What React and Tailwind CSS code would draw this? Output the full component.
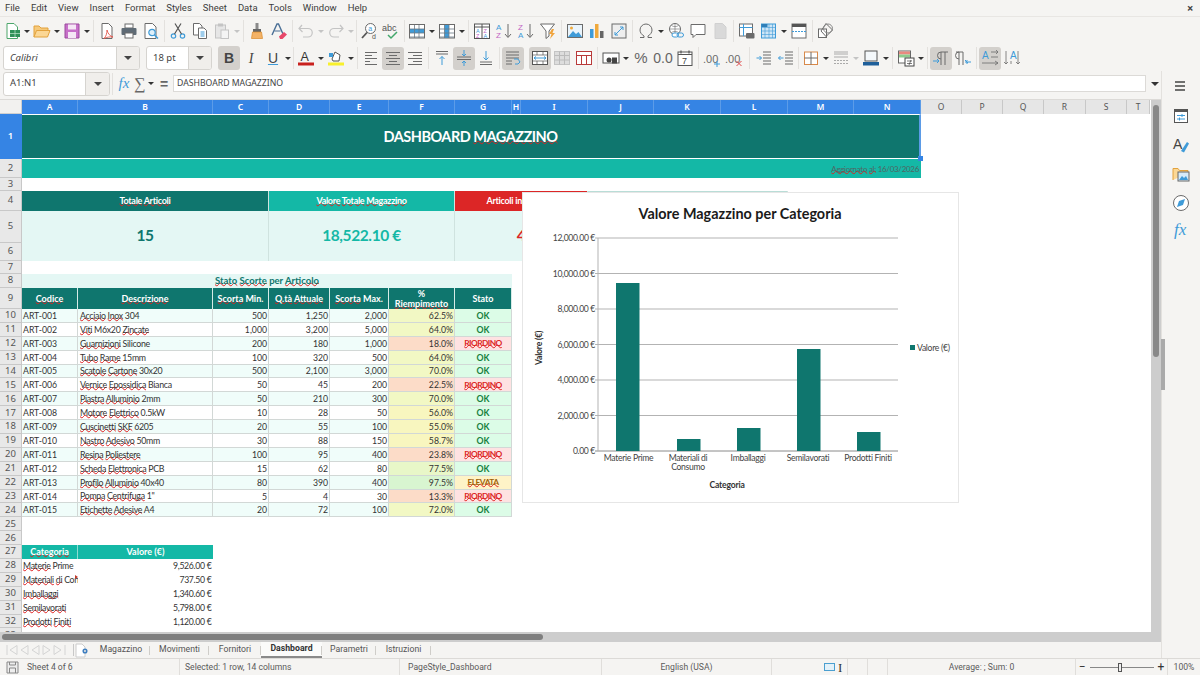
import React from "react";

const ui = "font-['Roboto',sans-serif]";
const noto = "font-['Noto_Sans',sans-serif]";
const cell = "font-['Lato',sans-serif]";

// toolbar icons, all on an 18x18 box
const BLUE = "#3f9bd8";
const GRAY = "#6b6b6b";
const PALE = "#c4c4c4";
const lines = (ys, x1, x2, c = GRAY) => ys.map((y) => <path key={y} d={`M${x1} ${y}H${x2}`} stroke={c} />);
const gridLines = (c) => <path d="M2 7H16M2 11H16M2 15H16M6.5 3V16M11 3V16" stroke={c} strokeWidth=".8" />;

const ICONS = {
  newdoc: <><path d="M4 1.5h7l3.5 3.5v11.5H4z" fill="#fff" stroke="#4ca66b" /><rect x="7" y="8" width="10" height="7" fill="#2f9158" /><path d="M7 11.5H17M12 8v7" stroke="#bfe6cd" strokeWidth=".7" /></>,
  open: <><path d="M1 15V4h5l2 2h7v3" fill="#f6c97a" stroke="#e2a23d" /><path d="M1 15l2.5-6.5H17L14.5 15z" fill="#fbd795" stroke="#e2a23d" /></>,
  save: <><path d="M2 2h14v14H2z" fill="#c76fc9" stroke="#9a4a9c" /><rect x="5" y="2.5" width="8" height="5" fill="#f5e6f5" /><rect x="5" y="10" width="8" height="6" fill="#f5e6f5" /></>,
  pdf: <><path d="M4 1.5h6.5L14 5v11.5H4z" fill="#fff" stroke={GRAY} /><path d="M9 8c1 4 3 6 6 7-3-.4-6 0-9 1.5 2-2 3-5 3-8.500z" fill="none" stroke="#e2574c" strokeWidth=".9" /></>,
  print: <><rect x="5" y="2" width="8" height="4" fill="#fff" stroke={GRAY} /><rect x="1.500" y="6" width="15" height="7" rx="1" fill="#5f6b75" /><rect x="5" y="11" width="8" height="5" fill="#fff" stroke={GRAY} /></>,
  preview: <><path d="M3 1.500h7.500L14 5v11.500H3z" fill="#fff" stroke={GRAY} /><circle cx="10" cy="10.500" r="3.200" fill="#dff0fa" stroke={BLUE} strokeWidth="1.200" /><path d="M12.500 13l3.500 3.500" stroke={BLUE} strokeWidth="1.500" /></>,
  cut: <><circle cx="4.500" cy="14" r="2.200" fill="none" stroke={BLUE} strokeWidth="1.200" /><circle cx="13.500" cy="14" r="2.200" fill="none" stroke={BLUE} strokeWidth="1.200" /><path d="M5.500 12L12 1.500M12.500 12L6 1.500" stroke="#555" strokeWidth="1.200" /></>,
  copy: <><path d="M2.500 1.500h6l2.500 2.500v9H2.500z" fill="#fff" stroke={GRAY} /><path d="M7.500 6h5.500l2.500 2.500v8h-8z" fill="#fff" stroke={GRAY} /><path d="M9.500 10h4M9.500 12h4M9.500 14h4" stroke={BLUE} /></>,
  paste: <><rect x="2.500" y="3" width="10" height="13" fill="#e6e6e6" stroke={PALE} /><rect x="5" y="1.500" width="5" height="3" fill={PALE} /><rect x="8" y="8" width="7.500" height="8.500" fill="#f4f4f4" stroke={PALE} /></>,
  brush: <><rect x="7.500" y="1" width="3" height="6" fill="#8a8a8a" /><path d="M5 7h8v3H5z" fill="#666" /><path d="M4.500 10h9l1 6.500h-11z" fill="#f3b266" stroke="#d98a2b" strokeWidth=".7" /></>,
  clear: <><path d="M2 13L7 2h1.500L13 12" fill="none" stroke="#4a6f96" strokeWidth="1.400" /><path d="M4.500 9h6" stroke="#4a6f96" /><path d="M9 14.500l5-4.500 3 2.500-4.500 4.500H10z" fill="#e8486a" /></>,
  undo: <path d="M5 3L2 6.500 5.500 10M2.500 6.500H11a4.200 4.200 0 010 8.500H6" fill="none" stroke={PALE} strokeWidth="1.200" />,
  redo: <path d="M13 3l3 3.500-3.500 3.500M15.500 6.500H7a4.200 4.200 0 000 8.500h5" fill="none" stroke={PALE} strokeWidth="1.200" />,
  find: <><circle cx="10.500" cy="6.500" r="5" fill="#fff" stroke={GRAY} /><path d="M7 10.500L2 16" stroke="#555" strokeWidth="1.800" /><text x="8.300" y="9" fontSize="7" fill={BLUE}>a</text><text x="12" y="17" fontSize="7" fill="#555">d</text></>,
  spell: <><text x="0" y="9" fontSize="9" fill="#555">abc</text><path d="M6 13l3 3 6-6" fill="none" stroke="#43a86b" strokeWidth="1.500" /></>,
  rows: <><rect x="1.500" y="2.500" width="15" height="13.500" fill="#fff" stroke={GRAY} /><rect x="2" y="7" width="14" height="4" fill={BLUE} />{gridLines("#6b7a85")}</>,
  cols: <><rect x="1.500" y="2.500" width="15" height="13.500" fill="#fff" stroke={GRAY} /><rect x="6.500" y="3" width="4.500" height="13" fill={BLUE} />{gridLines("#6b7a85")}</>,
  sort: <><rect x="1.500" y="2" width="15" height="14.500" fill="#fff" stroke="#555" /><path d="M1.500 5H16.500M9 2v14.500" stroke="#555" /><text x="3" y="10.500" fontSize="5.500" fill={BLUE}>A</text><text x="3" y="15.500" fontSize="5.500" fill="#c264c4">Z</text><text x="10.500" y="10.500" fontSize="5.500" fill="#c264c4">Z</text><text x="10.500" y="15.500" fontSize="5.500" fill={BLUE}>A</text></>,
  asc: <><text x="1" y="8" fontSize="8" fill={BLUE}>A</text><text x="1" y="16" fontSize="8" fill="#c264c4">Z</text><path d="M13 2v13M10 12l3 3.500 3-3.500" fill="none" stroke={GRAY} /></>,
  desc: <><text x="1" y="8" fontSize="8" fill="#c264c4">Z</text><text x="1" y="16" fontSize="8" fill={BLUE}>A</text><path d="M13 2v13M10 12l3 3.500 3-3.500" fill="none" stroke={GRAY} /></>,
  filter: <><path d="M1.500 2h14l-5.500 7v5l-3 2.500V9z" fill="#fff" stroke={GRAY} /><path d="M13 7l-3 5h2.500L11 17l5-6h-2.500l1.500-4z" fill="#f1a43c" /></>,
  image: <><rect x="1.500" y="2.500" width="15" height="13" fill="#eaf4fb" stroke={GRAY} /><circle cx="5.500" cy="6" r="1.500" fill="#f0a93c" /><path d="M2 15l5-6 3 3 2.500-2 3.500 5z" fill={BLUE} /></>,
  chart: <><rect x="2" y="7" width="3.500" height="9" fill={BLUE} /><rect x="7" y="2" width="3.500" height="14" fill="#f0a93c" /><rect x="12" y="9" width="3.500" height="7" fill="#666" /></>,
  pivot: <><rect x="2" y="2" width="14" height="14" fill="#eee" stroke={GRAY} /><path d="M5 13L13 5M10 5h3v3M5 10v3h3" fill="none" stroke={BLUE} /></>,
  omega: <path d="M3 15.500h4v-1.500C4.500 12.500 3 10.500 3 8a6 6 0 0112 0c0 2.500-1.500 4.500-4 6v1.500h4" fill="none" stroke={GRAY} />,
  link: <><circle cx="8" cy="7" r="5.500" fill="#fff" stroke={GRAY} /><path d="M2.500 7h11M8 1.500v11M4.500 3.500c2 1.500 5 1.500 7 0M4.500 10.500c2-1.500 5-1.500 7 0" stroke={GRAY} strokeWidth=".6" fill="none" /><rect x="5" y="11" width="6.500" height="4" rx="2" fill="#fff" stroke={BLUE} /><rect x="10" y="11" width="6.500" height="4" rx="2" fill="none" stroke={BLUE} /></>,
  comment: <path d="M2 2.500h14v10H7l-3 3v-3H2z" fill="#fff" stroke={GRAY} />,
  note: <path d="M4 1.500h7.500L15 5v11.500H4z" fill="#d9d9d9" stroke="#d0d0d0" />,
  printarea: <><rect x="1.500" y="2" width="13" height="12" fill="#fff" stroke={GRAY} /><path d="M1.500 5.500h13M5.500 2v12" stroke={BLUE} /><rect x="8" y="11" width="8.500" height="5.500" rx="1" fill="#6b6b6b" /></>,
  freeze: <><rect x="1.500" y="2" width="14" height="14" fill="#cfe6f6" stroke={BLUE} /><path d="M1.500 5.500h14M1.500 9h14M1.500 12.500h14M5 2v14M9 2v14M12.500 2v14" stroke={BLUE} strokeWidth=".6" /><rect x="1.500" y="2" width="6" height="3" fill="#2f7fb8" /></>,
  split: <><rect x="2" y="2" width="14" height="14" fill="#fff" stroke={GRAY} /><rect x="2" y="2" width="14" height="3" fill="#555" /><path d="M2 9.500h14" stroke={BLUE} strokeDasharray="2 1" /></>,
  shapes: <><rect x="1.500" y="7" width="8" height="8.500" fill="#fff" stroke={GRAY} /><path d="M9 1.500l6.500 6.500L9 14.500 4 9z" fill="none" stroke={GRAY} /><circle cx="11" cy="6.500" r="4.500" fill="none" stroke="#888" /></>,
  fontcolor: <><text x="3.500" y="12" fontSize="12.500" fill="#333">A</text><rect x="1" y="13.500" width="16" height="3" fill="#c9211e" /></>,
  highlight: <><path d="M5 10l3-7 5 3-1 6H6z" fill="#fff" stroke="#555" /><rect x="2" y="4" width="4" height="4" fill={BLUE} /><rect x="1" y="13.500" width="16" height="3" fill="#f8f02c" /></>,
  alLeft: <g>{lines([3.500, 6.500, 9.500, 12.500, 15.500], 3, 15)}<path d="M10 6.500h5M8 12.500h7" stroke="#eee" /></g>,
  alCenter: <g>{lines([3.500, 9.500, 15.500], 2, 16)}{lines([6.500, 12.500], 5, 13)}</g>,
  alRight: <g>{lines([3.500, 9.500, 15.500], 2, 16)}{lines([6.500, 12.500], 7, 16)}</g>,
  vTop: <g>{lines([2.500, 5], 3, 15)}<path d="M9 16V7.500M6.500 10L9 7.500 11.500 10" fill="none" stroke={BLUE} /></g>,
  vMid: <g>{lines([8, 10.500], 2, 16)}<path d="M9 1v6M7 5l2 2 2-2M9 17v-5M7 14l2-2 2 2" fill="none" stroke={BLUE} /></g>,
  vBottom: <g>{lines([13, 15.500], 3, 15)}<path d="M9 2v9M6.500 8.500L9 11l2.500-2.500" fill="none" stroke={BLUE} /></g>,
  wrap: <g>{lines([3, 6, 9], 2, 15)}{lines([12, 15], 2, 8)}<path d="M10 10h4l2 3-2 2h-3" fill="none" stroke={BLUE} /></g>,
  merge: <><rect x="1.500" y="2.500" width="15" height="13" fill="#fff" stroke="#555" /><path d="M1.500 6h15M1.500 12h15M6 2.500V6M12 2.500V6M6 12v3.500M12 12v3.500" stroke="#555" strokeWidth=".7" /><path d="M3 9h12M5 7.500L3 9l2 1.500M13 7.500L15 9l-2 1.500" fill="none" stroke={BLUE} /></>,
  mergeOff: <><rect x="1.500" y="2.500" width="15" height="13" fill="#ddd" stroke={PALE} /><path d="M1.500 6.500h15M1.500 11h15M6.500 2.500v13M11.500 2.500v13" stroke="#bbb" /></>,
  redGrid: <><rect x="1.500" y="2.500" width="15" height="13" fill="#fff" stroke="#b93a3a" /><path d="M1.500 6.500h15M6.500 6.500v9M11.500 6.500v9" stroke="#b93a3a" /></>,
  currency: <><rect x="1" y="4" width="16" height="10" fill="#fff" stroke="#555" /><circle cx="7" cy="11" r="2.500" fill="#444" /><rect x="10" y="8.500" width="5" height="6" fill="#444" /></>,
  date: <><rect x="2" y="3" width="14" height="13.500" fill="#fff" stroke="#555" /><path d="M2 5.500h14M5 1.500v3M13 1.500v3" stroke="#555" strokeWidth="1.200" /><text x="6" y="14.500" fontSize="9" fill="#444">7</text></>,
  addDec: <><text x="0" y="14" fontSize="11" fill={GRAY}>.00</text><path d="M11 15h6M14 12v6" stroke={BLUE} /></>,
  delDec: <><text x="0" y="14" fontSize="11" fill={GRAY}>.00</text><path d="M11.500 12l5 5M16.500 12l-5 5" stroke="#e04a4a" /></>,
  indent: <g>{lines([3, 6, 9, 12, 15], 8, 16)}<path d="M1.500 9h5M4.500 7l2 2-2 2" fill="none" stroke={BLUE} /></g>,
  outdent: <g>{lines([3, 6, 9, 12, 15], 8, 16)}<path d="M6.500 9h-5M3.500 7l-2 2 2 2" fill="none" stroke={BLUE} /></g>,
  borders: <><rect x="2.500" y="3" width="13" height="12.500" fill="#fff" stroke="#d8894a" /><path d="M9 3v12.500M2.500 9h13" stroke={GRAY} /></>,
  lineStyle: <g>{lines([3, 5, 8], 2, 16, "#aaa")}<path d="M2 11.500h14M2 14.500h14" stroke="#aaa" strokeDasharray="2 1" /></g>,
  borderColor: <><rect x="3" y="2" width="12" height="10" fill="#f4f8fb" stroke="#555" /><rect x="1" y="13" width="16" height="3.500" fill="#1e5f9a" /></>,
  cond: <><rect x="1.500" y="2" width="12" height="12" fill="#fff" stroke="#666" /><rect x="2" y="2.500" width="11" height="3" fill="#e98a80" /><rect x="2" y="5.500" width="11" height="3" fill="#8ecb8e" /><rect x="8" y="9" width="9" height="8" fill="#fff" stroke="#444" /><path d="M10 12h5M10 14.500h5M14 11l-2 5" stroke="#444" strokeWidth=".7" /></>,
  ltr: <><path d="M9 3h7M9 3v13M13 3v13M9 3a3.500 3.500 0 000 7" fill="none" stroke={GRAY} /><path d="M1 12h6M5 10l2 2-2 2" fill="none" stroke={BLUE} /></>,
  rtl: <><path d="M2 3h7M5 3v13M9 3v13M5 3a3.500 3.500 0 000 7" fill="none" stroke={GRAY} /><path d="M17 13h-5M13.500 11l-2 2 2 2M11 11l3 3" fill="none" stroke={BLUE} /></>,
  textH: <><text x="1" y="10" fontSize="10" fill={BLUE}>A</text><path d="M10 3h7M10 8h7M1 14h16M14 12l3 2-3 2M15 1l2 2-2 2" fill="none" stroke={GRAY} strokeWidth=".8" /></>,
  textV: <><text x="7" y="10" fontSize="10" fill={BLUE}>A</text><path d="M3 2v13M1 13l2 2 2-2M8 12v3M15 2v13M13 13l2 2 2-2" fill="none" stroke={GRAY} strokeWidth=".8" /></>,
  panel: <><rect x="2.500" y="2.500" width="13" height="13" fill="#fff" stroke="#555" /><rect x="2.500" y="2.500" width="13" height="2.500" fill="#555" /><path d="M5 8.500h8M5 12h8" stroke={BLUE} /><path d="M10 7v3M7.500 10.500v3" stroke={BLUE} /></>,
  styles: <><text x="1" y="13" fontSize="14" fill="#444">A</text><path d="M9 15l6-9 2 1.500-5 9z" fill={BLUE} /></>,
  gallery: <><path d="M1 15V3.500h5l1.500 2H16V8" fill="#fbd795" stroke="#e2a23d" /><rect x="6" y="7" width="11" height="9" fill="#d7ebf9" stroke="#666" /><path d="M7 15l3-4 2 2 2-2 2 4z" fill={BLUE} /></>,
  navigator: <><circle cx="9" cy="9" r="7.500" fill="#fff" stroke={GRAY} /><path d="M13 5l-2 6-6 2 2-6z" fill={BLUE} /></>,
};

function Icon({ name, active }) {
  return (
    <span className={`flex h-[23px] w-[22px] shrink-0 items-center justify-center rounded-[3px] ${active ? "bg-[#d3d0cc]" : ""}`}>
      <svg width="18" height="18" viewBox="0 0 18 18" fill="none" style={{ fontFamily: "Liberation Sans" }}>
        {ICONS[name]}
      </svg>
    </span>
  );
}

const Caret = ({ pale }) => (
  <span className="flex w-[8px] shrink-0 justify-center">
    <span className={`h-0 w-0 border-x-[3px] border-t-[3px] border-x-transparent ${pale ? "border-t-[#c4c4c4]" : "border-t-[#333]"}`} />
  </span>
);

const Sep = ({ w = "w-[5px]" }) => (
  <span className={`flex h-[22px] shrink-0 justify-center ${w}`}>
    <span className="h-full w-px bg-[#e3e1de]" />
  </span>
);

const WAVE = "underline decoration-[#e02020] decoration-wavy decoration-1 underline-offset-[-2px] [text-decoration-skip-ink:none]";

// "~" at the start of a word marks it as flagged by the spell checker
function Spell({ text }) {
  return text.split(" ").map((word, i) => (
    <React.Fragment key={i}>
      {i > 0 && " "}
      {word.startsWith("~") ? <span className={WAVE}>{word.slice(1)}</span> : word}
    </React.Fragment>
  ));
}

function MenuBar() {
  const items = ["File", "Edit", "View", "Insert", "Format", "Styles", "Sheet", "Data", "Tools", "Window", "Help"];
  return (
    <div className={`${ui} flex h-[17px] items-center justify-between border-b border-[#e8e6e3] pl-[5px] pr-[7px] pt-px text-[9.5px] text-[#3c3c3c]`}>
      <div className="flex gap-[11px]">
        {items.map((m) => (
          <span key={m}>{m}</span>
        ))}
      </div>
      <span className="text-[11px] font-bold leading-none text-[#444]">×</span>
    </div>
  );
}

function StandardBar() {
  return (
    <div className="flex h-[28px] items-center pl-px">
      <Icon name="newdoc" /><Caret /><Icon name="open" /><Caret /><Icon name="save" /><Caret /><Sep />
      <Icon name="pdf" /><Icon name="print" /><Icon name="preview" /><Sep />
      <Icon name="cut" /><Icon name="copy" /><Icon name="paste" /><Caret pale /><Sep />
      <Icon name="brush" /><Icon name="clear" /><Sep />
      <Icon name="undo" /><Caret pale /><Icon name="redo" /><Caret pale /><Sep w="w-[3px]" />
      <Icon name="find" /><Icon name="spell" /><Sep w="w-[4px]" />
      <Icon name="rows" /><Caret /><Icon name="cols" /><Caret /><Sep />
      <Icon name="sort" /><Icon name="asc" /><Icon name="desc" /><Icon name="filter" /><Sep />
      <Icon name="image" /><Icon name="chart" /><Icon name="pivot" /><Sep />
      <Icon name="omega" /><Caret /><Icon name="link" /><Icon name="comment" /><Icon name="note" /><Sep />
      <Icon name="printarea" /><Icon name="freeze" /><Caret /><Icon name="split" /><Sep />
      <Icon name="shapes" />
    </div>
  );
}

function Combo({ value, italic, box, arrow }) {
  return (
    <div className={`${noto} ${box} flex h-[24px] shrink-0 overflow-hidden rounded-[3px] border border-[#d6d4d0] bg-white text-[9.5px] text-[#444]`}>
      <span className={`flex flex-1 items-center pl-[6px] ${italic ? "italic" : ""}`}>{value}</span>
      <span className={`${arrow} flex items-center justify-center border-l border-[#d6d4d0] bg-[#f0eeeb]`}>
        <span className="h-0 w-0 border-x-[4px] border-t-[4px] border-x-transparent border-t-[#444]" />
      </span>
    </div>
  );
}

const TextBtn = ({ children, className, active }) => (
  <span className={`flex h-[24px] w-[22px] shrink-0 items-center justify-center rounded-[3px] font-['Liberation_Sans',sans-serif] text-[14px] text-[#444] ${active ? "bg-[#d3d0cc]" : ""} ${className}`}>
    {children}
  </span>
);

function FormatBar() {
  return (
    <div className="flex h-[26px] items-center pl-[3px]">
      <Combo value="Calibri" italic box="w-[137px] mr-[6px]" arrow="w-[23px]" />
      <Combo value="18 pt" box="w-[66px] mr-[6px]" arrow="w-[23px]" />
      <TextBtn active className="font-bold">B</TextBtn>
      <TextBtn className="font-['Liberation_Serif',serif] italic">I</TextBtn>
      <TextBtn className="underline decoration-[#3f9bd8]">U</TextBtn>
      <Caret /><Sep w="w-[3px]" />
      <Icon name="fontcolor" /><Caret /><Icon name="highlight" /><Caret /><Sep />
      <Icon name="alLeft" /><Icon name="alCenter" active /><Icon name="alRight" /><Sep />
      <Icon name="vTop" /><Icon name="vMid" active /><Icon name="vBottom" /><Sep />
      <Icon name="wrap" active /><span className="w-[5px]" /><Icon name="merge" active /><Icon name="mergeOff" /><Icon name="redGrid" /><Sep />
      <Icon name="currency" /><Caret />
      <TextBtn className="font-['Liberation_Sans',sans-serif] text-[15px] text-[#666]">%</TextBtn>
      <TextBtn className="text-[13px] text-[#666]">0.0</TextBtn>
      <Icon name="date" /><Sep />
      <Icon name="addDec" /><Icon name="delDec" /><Sep w="w-[8px]" />
      <Icon name="indent" /><Icon name="outdent" /><Sep w="w-[3px]" />
      <Icon name="borders" /><Caret /><Icon name="lineStyle" /><Caret pale /><Icon name="borderColor" /><Caret /><Sep />
      <Icon name="cond" /><Caret /><Sep />
      <Icon name="ltr" active /><Icon name="rtl" /><Sep />
      <Icon name="textH" active /><Icon name="textV" />
    </div>
  );
}

function FormulaBar() {
  return (
    <div className="flex h-[29px] items-center border-b border-[#dcdad7] pb-[3px] pl-[3px]">
      <Combo value="A1:N1" box="w-[107px]" arrow="w-[24px]" />
      <Sep />
      <span className="w-[18px] text-center font-['Liberation_Serif',serif] text-[15px] italic leading-none text-[#3f9bd8]">fx</span>
      <span className="w-[14px] text-center font-['Liberation_Serif',serif] text-[16px] leading-none text-[#666]">∑</span>
      <Caret />
      <span className="w-[18px] text-center font-['Liberation_Sans',sans-serif] text-[14px] font-bold leading-none text-[#666]">=</span>
      <div className={`${noto} mr-[2px] flex h-[17px] flex-1 items-center border border-[#dcdad7] bg-white pl-[3px] text-[8.7px] text-[#444]`}>
        DASHBOARD MAGAZZINO
      </div>
      <span className="flex w-[13px] justify-center">
        <span className="h-0 w-0 border-x-[4px] border-t-[4px] border-x-transparent border-t-[#333]" />
      </span>
    </div>
  );
}

const COLS = [
  ["A", "w-[56px]"], ["B", "w-[135px]"], ["C", "w-[56px]"], ["D", "w-[61px]"], ["E", "w-[59px]"],
  ["F", "w-[66px]"], ["G", "w-[57px]"], ["H", "w-[9px]"], ["I", "w-[67px]"], ["J", "w-[66px]"],
  ["K", "w-[67px]"], ["L", "w-[67px]"], ["M", "w-[66px]"], ["N", "w-[67px]"],
  ["O", "w-[41px]"], ["P", "w-[41px]"], ["Q", "w-[41px]"], ["R", "w-[42px]"], ["S", "w-[41px]"], ["T", "w-[23px]"],
];

function ColumnHeader() {
  return (
    <div className={`${noto} flex h-[14px] text-[8.5px] leading-[14px]`}>
      <div className="w-[22px] shrink-0 border-b border-r border-[#cfcfcf] bg-[#f2f1ef]" />
      {COLS.map(([name, w], i) => (
        <div
          key={name}
          className={`${w} shrink-0 border-r text-center ${i < 14 ? "border-[#5c9ce8] bg-[#3584e4] font-semibold text-white" : "border-[#c8c8c8] bg-[#e6e6e6] text-[#555]"}`}
        >
          {name}
        </div>
      ))}
    </div>
  );
}

const ROW_HEADS = [
  ["1", "h-[45px]"], ["2", "h-[19px]"], ["3", "h-[13px]"], ["4", "h-[20px]"], ["5", "h-[32px]"], ["6", "h-[18px]"],
  ["7", "h-[13px]"], ["8", "h-[14px]"], ["9", "h-[21px]"],
];
for (let n = 10; n <= 33; n++) ROW_HEADS.push([String(n), "h-[13.9px]"]);

function RowHeader() {
  return (
    <div className={`${noto} w-[22px] shrink-0 text-[9.5px]`}>
      {ROW_HEADS.map(([n, h]) => (
        <div
          key={n}
          className={`${h} flex items-center justify-center border-b border-r ${n === "1" ? "border-[#3584e4] bg-[#3584e4] font-semibold text-white" : "border-[#c8c8c8] bg-[#e8e8e8] text-[#555]"}`}
        >
          {n}
        </div>
      ))}
    </div>
  );
}

const STOCK = [
  ["ART-001", "~Acciaio ~Inox 304", "500", "1,250", "2,000", "62.5%", "OK"],
  ["ART-002", "~Viti M6x20 ~Zincate", "1,000", "3,200", "5,000", "64.0%", "OK"],
  ["ART-003", "~Guarnizioni Silicone", "200", "180", "1,000", "18.0%", "RIORDINO"],
  ["ART-004", "~Tubo ~Rame 15mm", "100", "320", "500", "64.0%", "OK"],
  ["ART-005", "~Scatole ~Cartone 30x20", "500", "2,100", "3,000", "70.0%", "OK"],
  ["ART-006", "~Vernice ~Epossidica Bianca", "50", "45", "200", "22.5%", "RIORDINO"],
  ["ART-007", "~Piastra ~Alluminio 2mm", "50", "210", "300", "70.0%", "OK"],
  ["ART-008", "~Motore ~Elettrico 0.5kW", "10", "28", "50", "56.0%", "OK"],
  ["ART-009", "~Cuscinetti ~SKF 6205", "20", "55", "100", "55.0%", "OK"],
  ["ART-010", "~Nastro ~Adesivo 50mm", "30", "88", "150", "58.7%", "OK"],
  ["ART-011", "~Resina ~Poliestere", "100", "95", "400", "23.8%", "RIORDINO"],
  ["ART-012", "~Scheda ~Elettronica PCB", "15", "62", "80", "77.5%", "OK"],
  ["ART-013", "~Profilo ~Alluminio 40x40", "80", "390", "400", "97.5%", "ELEVATA"],
  ["ART-014", "~Pompa ~Centrifuga 1\"", "5", "4", "30", "13.3%", "RIORDINO"],
  ["ART-015", "~Etichette ~Adesive A4", "20", "72", "100", "72.0%", "OK"],
];

const STATUS = {
  OK: "text-[#15803d]",
  RIORDINO: `text-[8.4px] tracking-[-0.55px] text-[#dc2626] ${WAVE}`,
  ELEVATA: `text-[8.4px] tracking-[-0.55px] text-[#a16207] ${WAVE}`,
};

function fillColour(pct) {
  const v = parseFloat(pct);
  if (v < 30) return "bg-[#fcdcc8]";
  if (v < 60) return "bg-[#f8f6bf]";
  if (v < 75) return "bg-[#f2f8c4]";
  if (v < 90) return "bg-[#e8f7c8]";
  return "bg-[#d8f5d0]";
}

const tdBase = "flex shrink-0 items-center overflow-hidden whitespace-nowrap border-b border-r border-[#d2d8d6]";

function StockRow({ row, odd }) {
  const [code, name, min, qty, max, pct, status] = row;
  const bg = odd ? "bg-white" : "bg-[#f0fdfa]";
  return (
    <div className="flex h-[13.9px] text-[8.7px] text-[#333]">
      <div className={`${tdBase} ${bg} w-[56px] pl-[1px]`}>{code}</div>
      <div className={`${tdBase} ${bg} w-[135px] pl-[2px] text-[8.8px] tracking-[-0.3px]`}><span><Spell text={name} /></span></div>
      <div className={`${tdBase} ${bg} w-[56px] justify-end pr-[1px]`}>{min}</div>
      <div className={`${tdBase} ${bg} w-[61px] justify-end pr-[1px]`}>{qty}</div>
      <div className={`${tdBase} ${bg} w-[59px] justify-end pr-[1px]`}>{max}</div>
      <div className={`${tdBase} ${fillColour(pct)} w-[66px] justify-end pr-[1px]`}>{pct}</div>
      <div className={`${tdBase} w-[57px] justify-center ${status === "OK" ? "bg-[#dcfce7]" : status === "RIORDINO" ? "bg-[#fee2e2]" : "bg-[#fef3c7]"}`}>
        <span className={`font-bold ${STATUS[status]}`}>{status}</span>
      </div>
    </div>
  );
}

function Kpi({ w, head, value, tone }) {
  return (
    <div className={`${w} shrink-0`}>
      <div className={`flex h-[20px] items-center justify-center border-r border-[#cfe3df] text-[9px] font-bold tracking-[-0.3px] text-white ${tone.head}`}>
        <span><Spell text={head} /></span>
      </div>
      <div className={`flex h-[50px] items-center justify-center border-r border-[#cfe3df] bg-[#e4f7f4] text-[15.5px] font-bold tracking-[-0.4px] ${tone.text}`}>
        {value}
      </div>
    </div>
  );
}

function Body() {
  const heads = [
    ["~Codice", "w-[56px]"], ["~Descrizione", "w-[135px]"], ["~Scorta Min.", "w-[56px]"], ["~Q.tà ~Attuale", "w-[61px]"],
    ["~Scorta Max.", "w-[59px]"], ["% ~Riempimento", "w-[66px]"], ["Stato", "w-[57px]"],
  ];
  const cats = [
    ["~Materie Prime", "9,526.00 €"], ["~Materiali ~di Consumo", "737.50 €"], ["~Imballaggi", "1,340.60 €"],
    ["~Semilavorati", "5,798.00 €"], ["~Prodotti ~Finiti", "1,120.00 €"],
  ];
  return (
    <div className={`${cell} relative w-[899px] shrink-0`}>
      <div className="flex h-[45px] items-center justify-center border-y border-r-2 border-y-white border-r-[#5b9be6] bg-[#0f766e] text-[14.5px] font-bold tracking-[-0.5px] text-white">
        <span>DASHBOARD <Spell text="~MAGAZZINO" /></span>
      </div>
      <div className="flex h-[19px] items-center justify-end bg-[#14b8a6] pr-[2px] text-[8px] tracking-[-0.3px] text-[#4f6663]">
        <span><Spell text="~Aggiornato ~al: 16/03/2026" /></span>
      </div>
      <div className="h-[13px]" />
      <div className="flex">
        <Kpi w="w-[247px]" head="~Totale ~Articoli" value="15" tone={{ head: "bg-[#0f766e]", text: "text-[#0f766e]" }} />
        <Kpi w="w-[186px]" head="~Valore ~Totale ~Magazzino" value="18,522.10 €" tone={{ head: "bg-[#14b8a6]", text: "text-[#14b8a6]" }} />
        <Kpi w="w-[133px]" head="~Articoli in Riordino" value="4" tone={{ head: "bg-[#dc2626]", text: "text-[#dc2626]" }} />
        <Kpi w="w-[200px]" head="" value="" tone={{ head: "bg-[#b9ddd7]", text: "" }} />
      </div>
      <div className="h-[13px]" />
      <div className="flex h-[14px] w-[490px] items-center justify-center bg-[#e4f7f4] text-[9.5px] font-bold text-[#0f766e]">
        <span><Spell text="~Stato ~Scorte per ~Articolo" /></span>
      </div>
      <div className="flex h-[21px] text-[9px] font-bold text-white">
        {heads.map(([h, w]) => (
          <div key={h} className={`${w} flex shrink-0 items-center justify-center border-r border-[#d6ebe7] bg-[#0f766e] text-center leading-[10px]`}>
            <span className={h.startsWith("%") ? "block w-[58px]" : ""}><Spell text={h} /></span>
          </div>
        ))}
      </div>
      {STOCK.map((r, i) => (
        <StockRow key={r[0]} row={r} odd={i % 2 === 1} />
      ))}
      <div className="h-[27.8px]" />
      <div className="flex h-[13.9px] text-[9px] font-bold text-white">
        <div className="flex w-[56px] items-center justify-center border-r border-[#8fdcd2] bg-[#14b8a6]"><span><Spell text="~Categoria" /></span></div>
        <div className="flex w-[135px] items-center justify-center bg-[#14b8a6]">Valore (€)</div>
      </div>
      {cats.map(([n, v]) => (
        <div key={v} className="flex h-[13.9px] items-center text-[8.7px] tracking-[-0.3px] text-[#333]">
          <div className="relative w-[56px] overflow-hidden whitespace-nowrap pl-[1px]">
            <Spell text={n} />
            {n.includes("Consumo") && <span className="absolute right-0 top-[2px] h-0 w-0 border-y-[2px] border-l-[3px] border-y-transparent border-l-[#c0392b]" />}
          </div>
          <div className="w-[135px] pr-[1.5px] text-right">{v}</div>
        </div>
      ))}
      <div className="absolute left-[896px] top-[42px] h-[5px] w-[5px] bg-[#3584e4]" />
      <Chart />
    </div>
  );
}

function Chart() {
  const grid = [
    ["12,000.00 €", 45], ["10,000.00 €", 80.5], ["8,000.00 €", 116], ["6,000.00 €", 151.5],
    ["4,000.00 €", 187], ["2,000.00 €", 222.5], ["0.00 €", 258],
  ];
  const bars = [
    [93, 90], [154, 246], [214, 235], [274, 156], [334, 239],
  ];
  const labels = [
    ["Materie Prime", 105.5], ["Materiali di", 165], ["Imballaggi", 225], ["Semilavorati", 285], ["Prodotti Finiti", 345],
  ];
  return (
    <div className="absolute left-[500px] top-[78px] h-[311px] w-[437px] border border-[#e6e6e6] bg-white">
      <svg width="435" height="309" viewBox="0 0 435 309" fontFamily="Lato, sans-serif" fill="#333">
        <text x="217" y="26" fontSize="14.4" fontWeight="700" textAnchor="middle" fill="#1a1a1a">Valore Magazzino per Categoria</text>
        {grid.map(([label, y]) => (
          <g key={label}>
            <path d={`M72 ${y}H375`} stroke={y === 258 ? "#8a8a8a" : "#b3b3b3"} />
            <text x="72" y={y + 3} fontSize="8.6" letterSpacing="-0.35" textAnchor="end" fill="#444">{label}</text>
          </g>
        ))}
        <path d="M75 45V258" stroke="#b3b3b3" />
        {bars.map(([x, top]) => (
          <rect key={x} x={x} y={top} width="23.5" height={258 - top} fill="#0f766e" />
        ))}
        {labels.map(([t, x]) => (
          <text key={t} x={x} y="268" fontSize="8.6" letterSpacing="-0.3" textAnchor="middle" fill="#444">{t}</text>
        ))}
        <text x="165" y="277" fontSize="8.6" letterSpacing="-0.3" textAnchor="middle" fill="#444">Consumo</text>
        <text x="204" y="295" fontSize="8.6" letterSpacing="-0.2" fontWeight="700" textAnchor="middle">Categoria</text>
        <text x="0" y="0" fontSize="8.6" letterSpacing="-0.2" fontWeight="700" textAnchor="middle" transform="translate(19 155) rotate(-90)">Valore (€)</text>
        <rect x="387" y="152" width="5" height="5" fill="#0f766e" />
        <text x="394" y="158" fontSize="8.6" letterSpacing="-0.3" fill="#444">Valore (€)</text>
      </svg>
    </div>
  );
}

function Sheet() {
  return (
    <div className="relative flex min-h-0 flex-1">
      <div className="min-w-0 flex-1 overflow-hidden bg-white">
        <ColumnHeader />
        <div className="flex">
          <RowHeader />
          <Body />
        </div>
      </div>
      <div className="flex w-[10px] shrink-0 justify-center bg-[#cdcdcd] pt-[5px]">
        <div className="h-[252px] w-[6px] rounded-full bg-[#888]" />
      </div>
    </div>
  );
}

function HScroll() {
  return (
    <div className="flex h-[10px] items-center bg-[#cdcdcd] pl-[2px]">
      <div className="h-[6px] w-[541px] rounded-full bg-[#7f7f7f]" />
    </div>
  );
}

function TabBar() {
  const tabs = [
    ["Magazzino", "w-[58px]"], ["Movimenti", "w-[59px]"], ["Fornitori", "w-[52px]"],
    ["Dashboard", "w-[61px]"], ["Parametri", "w-[54px]"], ["Istruzioni", "w-[55px]"],
  ];
  return (
    <div className={`${ui} flex h-[16px] items-center text-[8.7px] text-[#555]`}>
      <svg width="60" height="12" viewBox="0 0 60 12" className="ml-[6px] mr-[7px]" fill="none" stroke="#d4d4d4">
        <path d="M1 1v10M11 1.500L4 6l7 4.500zM22 1.500L15 6l7 4.500zM33 1.500L26 6l7 4.500zM37 1.500L44 6l-7 4.500zM48 1.500L55 6l-7 4.500zM59 1v10" />
      </svg>
      <span className="h-[12px] w-px bg-[#c8c8c8]" />
      <svg width="13" height="15" viewBox="0 0 13 15" className="ml-[1px] mr-[4px]">
        <path d="M1 1h6l3 3v10H1z" fill="#fff" stroke="#ccc" />
        <circle cx="10" cy="8" r="1.800" fill="none" stroke="#3f7fc0" strokeWidth="1.500" />
      </svg>
      {tabs.map(([t, w]) => (
        <React.Fragment key={t}>
          <div className={`${w} flex h-full items-center justify-center ${t === "Dashboard" ? "border-b-2 border-b-[#8a8a8a] bg-[#fbfbfa] font-bold text-[#333]" : ""}`}>
            {t}
          </div>
          <span className="-ml-px h-[9px] w-px bg-[#cfcdc9]" />
        </React.Fragment>
      ))}
    </div>
  );
}

function Sidebar() {
  return (
    <div className="relative w-[39px] shrink-0 border-l border-[#e3e1de] pl-[8px]">
      <div className="flex h-[29px] items-center pl-[3px]">
        <svg width="14" height="12" viewBox="0 0 14 12"><path d="M2 2h10M2 6h10M2 10h10" stroke="#444" strokeWidth="1.400" /></svg>
      </div>
      <div className="flex flex-col items-start gap-[6px] pt-[4px]">
        <Icon name="panel" />
        <Icon name="styles" />
        <Icon name="gallery" />
        <Icon name="navigator" />
      </div>
      <div className="pl-[4px] pt-[7px] font-['Liberation_Serif',serif] text-[17px] italic leading-none text-[#3f9bd8]">fx</div>
      <div className="absolute -left-px top-[268px] h-[51px] w-[4px] bg-[#aaa]" />
    </div>
  );
}

function StatusBar() {
  const seg = "flex h-full shrink-0 items-center border-r border-[#e0dedb]";
  return (
    <div className={`${ui} flex h-[17px] items-center border-t border-[#dcdad7] text-[8.6px] text-[#5a5a5a]`}>
      <div className={`${seg} w-[180px] gap-[8px] pl-[6px]`}>
        <svg width="13" height="13" viewBox="0 0 13 13"><path d="M1 1h11v11H1z" fill="#eee" stroke="#888" /><path d="M3.500 1v3h6V1M3.500 12V7h6v5" fill="none" stroke="#888" /></svg>
        Sheet 4 of 6
      </div>
      <div className={`${seg} w-[220px] pl-[5px]`}>Selected: 1 row, 14 columns</div>
      <div className={`${seg} w-[202px] pl-[8px]`}>PageStyle_Dashboard</div>
      <div className={`${seg} w-[170px] justify-center`}>English (USA)</div>
      <div className={`${seg} w-[76px] gap-[3px] pl-[52px]`}>
        <span className="h-[8px] w-[11px] border border-[#4a9fd0] bg-[#e3f1f9]" />
        <span className="font-['Liberation_Serif',serif] text-[13px] leading-none text-[#333]">I</span>
      </div>
      <div className={`${seg} w-[20px]`} />
      <div className={`${seg} w-[20px]`} />
      <div className={`${seg} w-[188px] justify-center`}>Average: ; Sum: 0</div>
      <div className={`${seg} w-[92px] justify-center gap-[4px] text-[#333]`}>
        <span className="text-[12px] leading-none">−</span>
        <span className="relative h-px w-[64px] bg-[#888]">
          <span className="absolute left-[28px] top-[-4px] h-[9px] w-[4px] border border-[#555] bg-[#eee]" />
        </span>
        <span className="text-[12px] leading-none">+</span>
      </div>
      <div className="flex-1 text-center">100%</div>
    </div>
  );
}

export default function App() {
  return (
    <div className="flex h-[675px] w-[1200px] flex-col overflow-hidden bg-[#f5f4f2]">
      <MenuBar />
      <StandardBar />
      <FormatBar />
      <div className="flex min-h-0 flex-1">
        <div className="flex w-[1161px] shrink-0 flex-col">
          <FormulaBar />
          <Sheet />
          <HScroll />
          <TabBar />
        </div>
        <Sidebar />
      </div>
      <StatusBar />
    </div>
  );
}
